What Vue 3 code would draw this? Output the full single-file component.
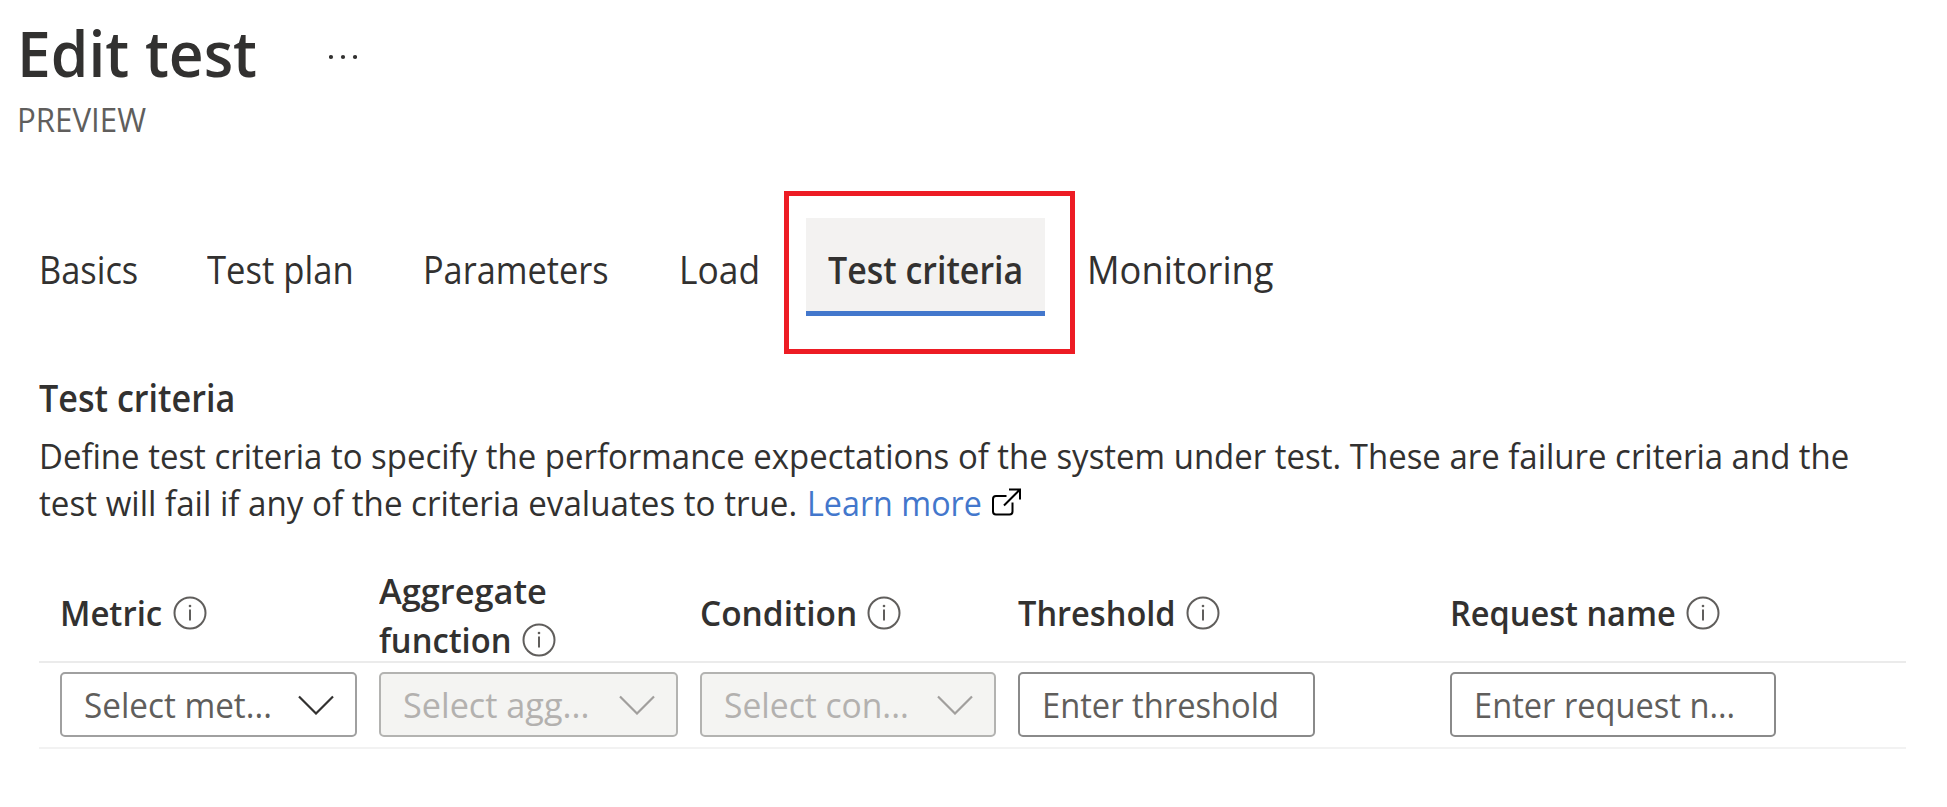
<script setup>
// sx condenses a label horizontally; w is the room a header label takes before its icon
const tabs = [
  { label: 'Basics', key: 'basics', sx: 0.917 },
  { label: 'Test plan', key: 'plan', sx: 0.923 },
  { label: 'Parameters', key: 'params', sx: 0.914 },
  { label: 'Load', key: 'load', sx: 0.943 },
  { label: 'Test criteria', key: 'criteria', sx: 0.905, active: true },
  { label: 'Monitoring', key: 'monitoring', sx: 0.967 },
]
const columns = [
  { key: 'metric', lines: [{ t: 'Metric', sx: 0.942, w: 112.5 }], kind: 'select', text: 'Select met...', sx: 0.95 },
  {
    key: 'aggregate',
    lines: [{ t: 'Aggregate', sx: 0.982, w: 180 }, { t: 'function', sx: 0.935, w: 142.5 }],
    kind: 'select', text: 'Select agg...', sx: 0.978, disabled: true,
  },
  { key: 'condition', lines: [{ t: 'Condition', sx: 0.955, w: 167 }], kind: 'select', text: 'Select con...', sx: 0.96, disabled: true },
  { key: 'threshold', lines: [{ t: 'Threshold', sx: 0.93, w: 167.5 }], kind: 'input', text: 'Enter threshold', sx: 0.934 },
  { key: 'request', lines: [{ t: 'Request name', sx: 0.93, w: 235.5 }], kind: 'input', text: 'Enter request n...', sx: 0.932 },
]
const fit = (sx) => ({ transform: `scaleX(${sx})` })
</script>

<template>
  <main class="page">
    <header class="title-row">
      <h1><span class="fit">Edit test</span></h1>
      <svg class="more" viewBox="0 0 28 6" width="28" height="6">
        <circle cx="2" cy="3" r="2.1" /><circle cx="14" cy="3" r="2.1" /><circle cx="26" cy="3" r="2.1" />
      </svg>
    </header>
    <div class="preview"><span class="fit">PREVIEW</span></div>

    <nav class="tabs">
      <div v-for="t in tabs" :key="t.key" class="tab" :class="[t.key, { active: t.active }]">
        <span class="fit" :style="fit(t.sx)">{{ t.label }}</span>
        <i v-if="t.active" class="highlight"></i>
      </div>
    </nav>

    <h2><span class="fit">Test criteria</span></h2>
    <p class="desc">
      <span class="line first"><span class="fit">Define test criteria to specify the performance expectations of the system under test. These are failure criteria and the</span></span>
      <span class="line">
        <span class="lead"><span class="fit">test will fail if any of the criteria evaluates to true.</span></span>
        <a><span class="fit">Learn more</span></a>
        <svg class="ext" viewBox="0 0 30 28" width="30" height="28">
          <path d="M15.500 8H5Q2 8 2 11V23.500Q2 26.500 5 26.500H18.500Q21.500 26.500 21.500 23.500V14.500" />
          <path d="M13 17.500L29 1.500M18 1.500H29V11.500" />
        </svg>
      </span>
    </p>

    <section class="table">
      <div class="row head">
        <div v-for="c in columns" :key="c.key" class="th" :class="c.key">
          <div v-for="(l, i) in c.lines" :key="l.t" class="th-line">
            <span class="label" :style="{ width: l.w + 'px' }"><span class="fit" :style="fit(l.sx)">{{ l.t }}</span></span>
            <svg v-if="i === c.lines.length - 1" class="info" viewBox="0 0 34 34" width="34" height="34">
              <circle cx="17" cy="17" r="15.500" />
              <circle class="dot" cx="17" cy="10" r="1.300" />
              <path d="M17 13.500V24.500" />
            </svg>
          </div>
        </div>
      </div>
      <div class="row body">
        <div v-for="c in columns" :key="c.key" class="td">
          <div class="control" :class="[c.kind, c.key, { disabled: c.disabled }]">
            <span class="fit" :style="fit(c.sx)">{{ c.text }}</span>
            <svg v-if="c.kind === 'select'" class="chev" viewBox="0 0 36 20" width="36" height="20">
              <path d="M1 1.500L18 18.500L35 1.500" />
            </svg>
          </div>
        </div>
      </div>
    </section>
  </main>
</template>

<style>
body { background: #fff; }
</style>

<style scoped>
.page {
  width: 1947px;
  height: 807px;
  overflow: hidden;
  box-sizing: border-box;
  font-family: "Open Sans", "Noto Sans", sans-serif;
  color: #323130;
  white-space: nowrap;
}
.fit { display: inline-block; flex: none; transform-origin: 0 50%; }
.title-row { display: flex; align-items: center; height: 96px; padding: 10px 0 0 17px; box-sizing: border-box; }
h1 { margin: 0; width: 312px; font-size: 64px; font-weight: 600; line-height: 88px; }
h1 .fit { transform: scaleX(0.945); }
.more { fill: #323130; margin-top: 7px; }
.preview { padding-left: 17px; margin-top: 2px; height: 44px; line-height: 44px; font-size: 32px; color: #605e5c; }
.preview .fit { transform: scaleX(0.977); }

.tabs {
  display: grid;
  grid-template-columns: 168px 216px 256px 149px 259px auto;
  margin-top: 76px;
  padding-left: 17px;
  height: 98px;
}
.tab { position: relative; padding-left: 22px; font-size: 37.500px; line-height: 104px; }
.tab.active {
  width: 239px;
  height: 98px;
  box-sizing: border-box;
  background: #f3f2f1;
  border-bottom: 5px solid #4377cc;
  font-weight: 600;
}
.highlight { position: absolute; left: -22px; top: -27px; width: 281px; height: 153px; border: 5px solid #ed1c24; }

h2 { margin: 55px 0 0 39px; font-size: 38.500px; line-height: 52px; font-weight: 600; }
h2 .fit { transform: scaleX(0.886); }
.desc { margin: 9px 0 0 39px; font-size: 35px; line-height: 47px; }
.desc .fit { transform: scaleX(0.947); }
.desc .first .fit { transform: scaleX(0.9418); }
.line { display: flex; align-items: center; height: 47px; }
.lead { flex: none; width: 768px; }
a { flex: none; width: 184px; color: #4377cc; }
.desc a .fit { transform: scaleX(0.922); }
.ext { fill: none; stroke: #000; stroke-width: 2; margin-bottom: 1px; }

.table { margin: 40px 41px 0 39px; }
.row { display: grid; grid-template-columns: 319px 321px 318px 432px 1fr; padding-left: 21px; }
.head { height: 97px; box-sizing: border-box; border-bottom: 2px solid #ebebeb; }
.body { height: 86px; box-sizing: border-box; border-bottom: 2px solid #f2f2f2; padding-top: 9px; }
.th { padding-top: 22px; font-size: 35px; font-weight: 600; line-height: 49px; }
.th.aggregate { padding-top: 0; }
.th-line { display: flex; align-items: center; height: 49px; }
.label { flex: none; }
.info { flex: none; fill: none; stroke: #605e5c; stroke-width: 2; }
.info .dot { fill: #605e5c; stroke: none; }
.control {
  display: flex;
  align-items: center;
  justify-content: space-between;
  box-sizing: border-box;
  width: 297px;
  height: 65px;
  border: 2px solid #8a8a8a;
  border-radius: 5px;
  padding: 0 21px 0 22px;
  font-size: 35px;
  color: #605e5c;
}
.control.metric { border-color: #a0a0a0; }
.control.aggregate { width: 299px; }
.control.condition { width: 296px; }
.control.request { width: 326px; }
.control.disabled { background: #f4f4f2; border-color: #b3b3b1; color: #b3b1af; }
.chev { flex: none; fill: none; stroke: #323130; stroke-width: 2.200; }
.disabled .chev { stroke: #a19f9d; }
</style>
